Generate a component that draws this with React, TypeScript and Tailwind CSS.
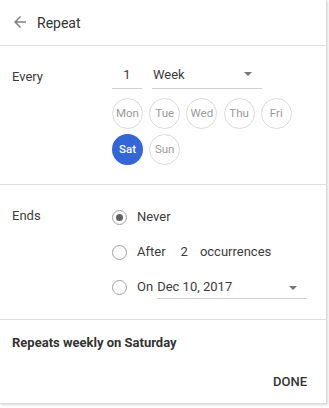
import React from "react";

const days = ["Mon", "Tue", "Wed", "Thu", "Fri", "Sat", "Sun"];

function Radio({ checked }: { checked?: boolean }) {
  return (
    <span className="flex h-[15px] w-[15px] items-center justify-center rounded-full border border-[#a0a0a0]">
      {checked && <span className="h-[7px] w-[7px] rounded-full bg-[#616161]" />}
    </span>
  );
}

function Caret() {
  return (
    <svg width="8" height="4" viewBox="0 0 8 4">
      <path d="M0 0 L8 0 L4 4 Z" fill="#757575" />
    </svg>
  );
}

export default function App() {
  return (
    <div className="h-[408px] w-[329px] bg-white" style={{ fontFamily: "Roboto, 'Liberation Sans', sans-serif" }}>
      <div className="flex h-[404px] w-[327px] flex-col border-r border-b border-[#dcdcdc] bg-white text-[#3c3c3c] shadow-[1px_1px_2px_rgba(0,0,0,0.15)]">
        <div className="flex h-[46px] items-center border-b border-[#e0e0e0] pl-[11px]">
          <svg width="18" height="18" viewBox="0 0 24 24" className="mt-[-1px]">
            <path d="M20 11H7.83l5.59-5.59L12 4l-8 8 8 8 1.41-1.41L7.83 13H20v-2z" fill="#808080" />
          </svg>
          <span className="ml-[8px] mt-[1px] text-[14px] text-[#333]">Repeat</span>
        </div>
        <div className="flex border-b border-[#e0e0e0] pb-[19px] pt-[19px]">
          <div className="w-[112px] pl-[12px] pt-[2px] text-[13px]">Every</div>
          <div className="flex flex-col">
            <div className="flex gap-[10px]">
              <div className="flex h-[24px] w-[30px] items-start justify-center border-b border-[#cfcfcf] text-[13px]">1</div>
              <div className="flex h-[24px] w-[110px] items-start justify-between border-b border-[#cfcfcf] text-[13px]">
                <span className="pl-[1px]">Week</span>
                <span className="mr-[10px] mt-[7px]"><Caret /></span>
              </div>
            </div>
            <div className="mt-[9px] grid w-[180px] grid-cols-5 gap-x-[6px] gap-y-[5px]">
              {days.map((d) =>
                d === "Sat" ? (
                  <div key={d} className="flex h-[31px] w-[31px] items-center justify-center rounded-full bg-[#3367d6] text-[11.5px] font-medium text-white">
                    {d}
                  </div>
                ) : (
                  <div key={d} className="flex h-[31px] w-[31px] items-center justify-center rounded-full border border-[#dadada] text-[11.5px] text-[#9a9a9a]">
                    {d}
                  </div>
                )
              )}
            </div>
          </div>
        </div>
        <div className="flex border-b border-[#e0e0e0] pb-[20px] pt-[21px]">
          <div className="w-[112px] pl-[12px] text-[13px]">Ends</div>
          <div className="flex flex-col gap-[19px] pt-[3px]">
            <div className="flex h-[16px] items-center">
              <Radio checked />
              <span className="ml-[10px] text-[13px]">Never</span>
            </div>
            <div className="flex h-[16px] items-center">
              <Radio />
              <span className="ml-[10px] text-[13px]">After</span>
              <span className="ml-[15px] text-[13px]">2</span>
              <span className="ml-[12px] text-[13px]">occurrences</span>
            </div>
            <div className="flex items-start">
              <span className="flex h-[16px] items-center"><Radio /></span>
              <span className="ml-[10px] text-[13px] leading-[16px]">On</span>
              <div className="ml-[4px] flex h-[20px] w-[150px] items-start justify-between border-b border-[#cfcfcf] text-[13px] leading-[16px]">
                <span>Dec 10, 2017</span>
                <span className="mr-[10px] mt-[7px]"><Caret /></span>
              </div>
            </div>
          </div>
        </div>
        <div className="pl-[12px] pt-[13px] text-[13px] font-bold text-[#333]">Repeats weekly on Saturday</div>
        <div className="flex justify-end pr-[19px] pt-[19px]">
          <span className="text-[13px] font-medium text-[#333]">DONE</span>
        </div>
      </div>
    </div>
  );
}
